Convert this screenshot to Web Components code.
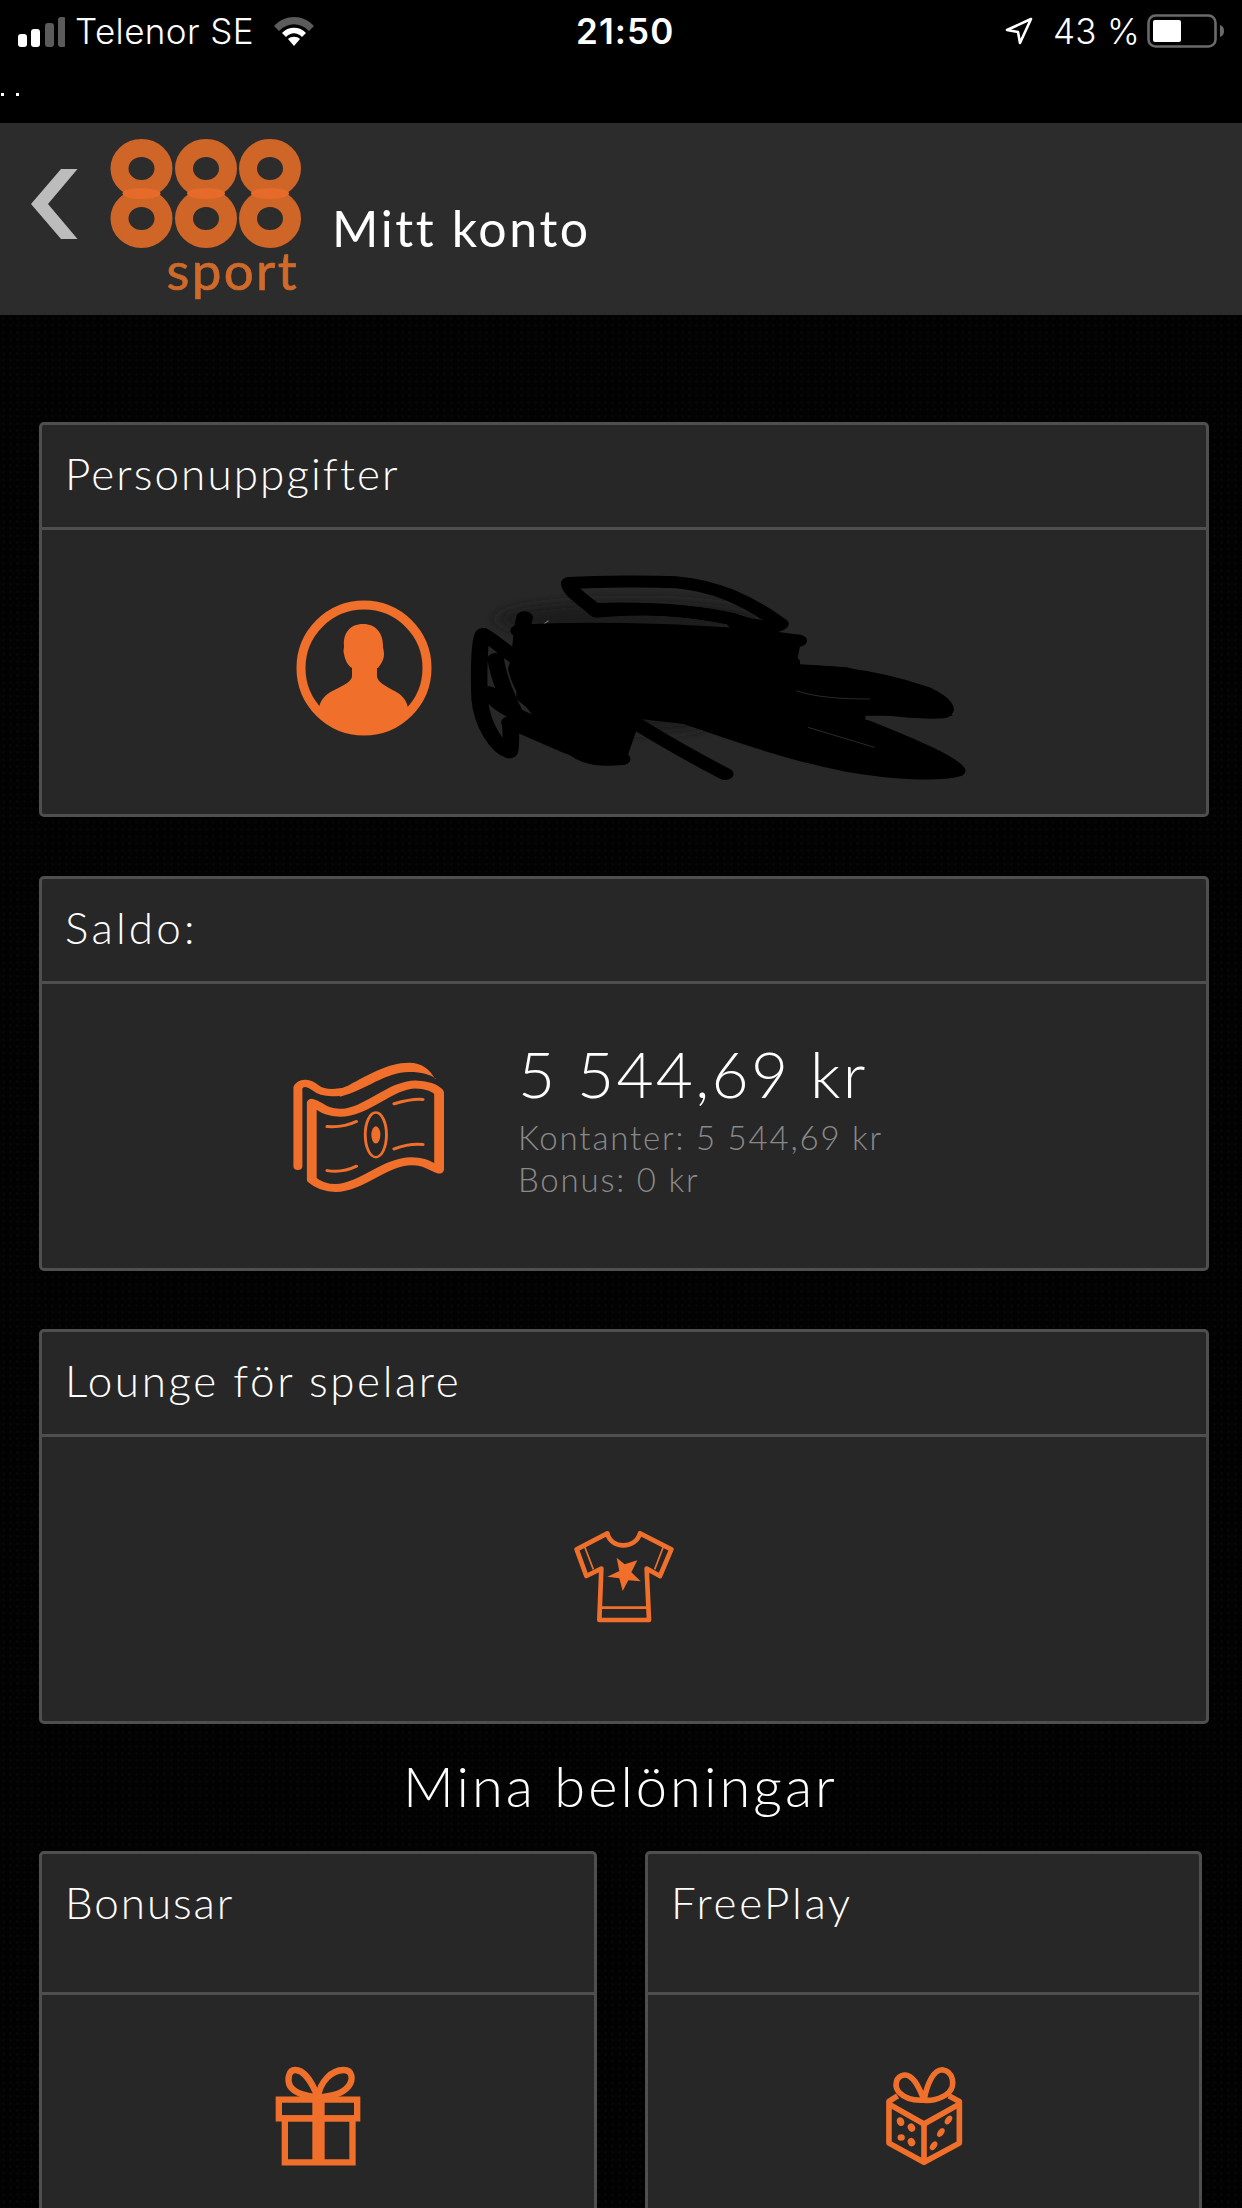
<!DOCTYPE html>
<html lang="sv"><head><meta charset="utf-8"><title>Mitt konto</title>
<style>
html,body{margin:0;padding:0;background:#020202;}
body{width:1242px;height:2208px;overflow:hidden;font-family:"Lato","Liberation Sans",sans-serif;color:#fff;}
</style></head>
<body>
<account-page></account-page>
<template id="t-status">
<style>
:host{display:block;height:123px;background:#000;color:#fff;font-family:Inter,"Liberation Sans",sans-serif;position:relative}
.row{display:flex;align-items:center;height:62px;padding-left:18px;font-size:35px;font-weight:300}
.bars{width:47px;height:31px;display:block;margin-right:10px}
.car{width:198px;white-space:nowrap;letter-spacing:.4px}
.wifi{width:42px;height:30px;display:block}
.time{margin-left:261px;font-weight:600;font-size:35px;letter-spacing:1.100px;width:101px;white-space:nowrap}
.arrow{margin-left:328px;width:28px;height:28px;display:block}
.pct{margin-left:20px;width:95px;white-space:nowrap;letter-spacing:.3px}
.batt{margin-left:-1px;width:78px;height:34px;display:block}
.dots{display:flex;gap:12px;padding-left:1px;margin-top:31px}
.dots i{display:block;width:3px;height:3px;background:#fff}
</style>
<div class="row">
<svg class="bars" viewBox="0 0 47 31"><rect x="0" y="18" width="9" height="13" rx="3" fill="#fff"/><rect x="13" y="13" width="9" height="18" rx="3" fill="#fff"/><rect x="27" y="7" width="9" height="24" rx="3" fill="#5b5b5b"/><rect x="40" y="1" width="8" height="30" rx="3" fill="#5b5b5b"/></svg>
<span class="car">Telenor SE</span>
<svg class="wifi" viewBox="0 0 42 30"><path d="M1 10 C12 -2 30 -2 41 10 L36 15 C27 6 15 6 6 15Z" fill="#5b5b5b"/><path d="M9 17 C15 10 27 10 33 17 L29 21 C24 16 18 16 13 21Z" fill="#fff"/><path d="M15 23 C18 20 24 20 27 23 L21 30Z" fill="#fff"/></svg>
<span class="time">21:50</span>
<svg class="arrow" viewBox="0 0 28 28"><path d="M26 2 L2 13 L13 15 L15 26Z" fill="none" stroke="#fff" stroke-width="2.6" stroke-linejoin="round"/></svg>
<span class="pct">43 %</span>
<svg class="batt" viewBox="0 0 78 34"><rect x="1.5" y="1.5" width="67" height="31" rx="7" fill="none" stroke="#6a6a6a" stroke-width="2.6"/><rect x="6" y="6" width="28" height="22" rx="2" fill="#fff"/><path d="M73 11 C76 12 77 14 77 17 C77 20 76 22 73 23Z" fill="#6a6a6a"/></svg>
</div>
<div class="dots"><i></i><i></i></div>
</template>
<template id="t-header">
<style>
:host{display:flex;height:192px;background:#2c2c2c;box-sizing:border-box;padding-left:30px;align-items:flex-start}
.chev{width:48px;height:72px;margin-top:45px;display:block}
.wrap{display:flex;flex-direction:column;align-items:flex-end;width:192px;margin-left:32px;}
.logo{margin:15px 0 0;width:192px;height:112px;display:block;filter:blur(.6px)}
.sport{font-size:53px;line-height:40px;color:#d06a2b;font-weight:400;margin-top:0;margin-right:3px;filter:blur(.6px);letter-spacing:2.300px;-webkit-text-stroke:.7px #d06a2b}
h1{margin:75px 0 0 30px;font-size:50px;line-height:60px;font-weight:400;letter-spacing:2.600px;color:#fff}
</style>
<svg class="chev" viewBox="0 0 48 72"><path d="M47.500 1 L31 1 L1 36 L31 71 L47.500 71 L18 36Z" fill="#bcbcbc"/></svg>
<div class="wrap">
<svg class="logo" viewBox="0 0 192 112" role="img" aria-label="888">
<g fill="none" stroke="#cf6526" stroke-width="18">
<ellipse cx="31.500" cy="30.500" rx="22" ry="20.500"/><ellipse cx="96" cy="30.500" rx="22" ry="20.500"/><ellipse cx="160" cy="30.500" rx="22" ry="20.500"/>
<ellipse cx="31.500" cy="80.500" rx="22" ry="20.500"/><ellipse cx="96" cy="80.500" rx="22" ry="20.500"/><ellipse cx="160" cy="80.500" rx="22" ry="20.500"/>
</g>
<g fill="#e66a2a"><ellipse cx="31.500" cy="55.500" rx="19" ry="5.500"/><ellipse cx="96" cy="55.500" rx="19" ry="5.500"/><ellipse cx="160" cy="55.500" rx="19" ry="5.500"/></g>
</svg>
<span class="sport">sport</span>
</div>
<h1>Mitt konto</h1>
</template>
<template id="t-card">
<style>
:host{display:block;box-sizing:border-box;background:#272727;border:3px solid #4f4f4f;border-radius:5px;}
.head{height:var(--head,102px);border-bottom:3px solid #4f4f4f;padding:0 0 0 23px;font-size:44px;font-weight:300;letter-spacing:2.100px;color:#fff;line-height:var(--lh,97px)}
.body{height:var(--body,284px);display:flex;align-items:center;justify-content:center;position:relative;box-sizing:border-box}
</style>
<div class="head"><slot name="title"></slot></div>
<div class="body"><slot></slot></div>
</template>
<template id="t-page">
<style>
:host{display:block;width:1242px;height:2208px;overflow:hidden;background-color:#020202;background-image:radial-gradient(#070707 1px,transparent 1.500px);background-size:7px 7px}
main{padding:107px 33px 0 39px;display:flex;flex-direction:column}
.gap{height:58.500px;flex:none}
h2{margin:22px 0 0;font-size:56px;line-height:80px;font-weight:300;letter-spacing:3.050px;color:#fff;text-align:center;height:94px;padding-right:7px}
.two{display:grid;grid-template-columns:558px 557px;column-gap:48px;margin-top:11px;--head:138px;--lh:96px;--body:400px;}
svg{display:block;flex:none}
.scribble{position:absolute;left:231px;top:29px;width:720px;height:240px;overflow:visible}
.avatar{margin-right:520px;margin-bottom:8px}
.money{display:flex;align-items:flex-start;padding-right:72px}
.money .icon{margin-top:11px}
.money .txt{margin-left:74px;display:flex;flex-direction:column;margin-top:-14px}
.big{font-size:64px;line-height:74px;font-weight:300;letter-spacing:2.300px;color:#fff;margin-left:0;margin-bottom:5px}
.sub{font-size:33px;line-height:42px;font-weight:300;letter-spacing:1.800px;color:#8a8a8a;white-space:nowrap}
.grayline{stroke:#7a7a7a;stroke-width:2.500;fill:none}
.tee{margin-bottom:4px}
.rew{margin-bottom:159px}
</style>
<main>
<info-card><span slot="title">Personuppgifter</span>
<svg class="avatar" width="136" height="136" viewBox="0 0 136 136">
<circle cx="68" cy="68" r="63" fill="none" stroke="#f0702b" stroke-width="9"/>
<path d="M67 24 C80 24 87 33 87 46 C87 49 88 50 88 54 C88 60 85 64 82 68 L81 68 L81 76 C81 83 94 88 102 93 C108 97 111 102 112 108 C100 124 86 132 68 132 C50 132 36 124 23 108 C24 102 27 97 33 93 C41 88 56 83 56 76 L56 68 C52 66 49 60 48 54 C47 50 48 49 48 46 C47 33 54 24 67 24Z" fill="#f0702b"/>
</svg>
<svg class="scribble" viewBox="0 0 1568 720" preserveAspectRatio="none">
<defs><filter id="b" x="-20%" y="-50%" width="140%" height="200%"><feGaussianBlur stdDeviation="16"/></filter></defs>
<ellipse cx="780" cy="180" rx="290" ry="55" fill="#1a1a1a" filter="url(#b)"/>
<ellipse cx="830" cy="480" rx="130" ry="40" fill="#1c1c1c" filter="url(#b)"/>
<path class="grayline" d="M590 195 L600 185 M655 240 L680 232 L700 245 M720 240 L760 238 M560 280 L553 310 M775 440 L775 465 M815 435 L815 465"/>
<path d="M535 205 L1150 245 L1140 315 L1250 325 L1450 405 L1480 470 L1290 470 L1290 490 L1490 620 L1500 650 L1400 655 L1150 590 L930 500 L800 480 L770 600 L700 610 L600 500 L530 420 L530 310Z" fill="#000"/>
<g fill="none" stroke="#000" stroke-linecap="round" stroke-linejoin="round" stroke-width="36">
<path d="M645 72 C720 66 820 66 880 70 C960 80 1030 120 1105 195 C1095 212 1040 200 1000 180 C900 150 800 145 705 158 C680 125 645 100 645 72Z"/>
<path d="M700 150 C800 145 900 150 1000 180 L1070 295"/>
<path d="M535 215 C700 200 1000 215 1145 245 M1100 260 L1130 310"/>
<path d="M548 175 C540 210 540 300 530 330 C540 400 590 480 650 565 C680 605 720 605 760 600"/>
<path d="M458 225 C448 240 448 360 450 420 C455 500 490 570 515 580 C520 560 518 500 515 490 L640 565 L700 595 L760 600 M458 225 C500 260 520 300 590 350 M470 400 C490 450 540 470 600 510 M485 300 C490 350 510 420 530 470"/>
<path d="M690 400 C780 490 880 570 985 645"/>
<path d="M1050 335 C1200 330 1300 345 1420 400 C1465 430 1470 450 1460 460 C1400 465 1280 450 1150 400"/>
<path d="M800 430 C950 500 1100 580 1250 620 C1350 645 1450 650 1490 635 C1480 610 1400 560 1290 500"/>
</g>
<path d="M1140 395 C1180 415 1240 420 1300 420" stroke="#777" stroke-width="1.500" fill="none" opacity=".6"/>
<path d="M1165 505 L1310 565" stroke="#666" stroke-width="1.500" fill="none" opacity=".7"/>
</svg>
</info-card>
<div class="gap"></div>
<info-card><span slot="title" style="letter-spacing:3.200px">Saldo:</span>
<div class="money">
<svg class="icon" width="151" height="131" viewBox="60 128 370 392" preserveAspectRatio="none">
<g fill="none" stroke="#f0702b" stroke-linecap="round" stroke-linejoin="round">
<path stroke-width="24" d="M106 250 C125 255 135 280 175 280 C240 280 300 195 360 195 C385 195 410 205 418 220 L418 450 C395 440 385 425 350 425 C285 425 225 505 165 505 C140 505 120 495 106 480Z"/>
<path stroke-width="22" d="M72 440 L72 205 C80 185 100 190 115 205 C130 220 150 222 175 218"/>
<path stroke-width="9" d="M308 253 C330 245 355 238 378 240 M308 388 C330 378 355 372 378 375 M144 321 C170 323 195 318 215 306 M144 453 C170 458 195 452 215 440"/>
</g>
<path d="M408 178 C395 150 375 130 345 130 C290 130 240 170 200 195 C185 205 175 208 165 208 L175 232 C240 212 285 158 345 158 C375 158 395 165 411 178Z" fill="#f0702b"/>
<ellipse cx="263" cy="346" rx="26" ry="67" fill="none" stroke="#f0702b" stroke-width="7"/>
<ellipse cx="263" cy="346" rx="11" ry="26" fill="#f0702b"/>
</svg>
<div class="txt"><div class="big">5 544,69 kr</div><div class="sub">Kontanter: 5 544,69 kr</div><div class="sub">Bonus: 0 kr</div></div>
</div>
</info-card>
<div class="gap"></div>
<info-card><span slot="title" style="letter-spacing:2.600px">Lounge för spelare</span>
<svg class="tee" width="100" height="92" viewBox="100 90 300 276">
<g fill="none" stroke="#f0702b" stroke-width="14" stroke-linejoin="round">
<path d="M200 97 C210 145 285 145 298 97 L392 145 L358 225 L318 203 L325 357 L176 357 L182 203 L137 225 L108 145Z"/>
<path d="M176 320 L325 320" stroke-width="8"/>
</g>
<path d="M130 132 L158 205 M370 132 L342 205" stroke="#f0702b" stroke-width="5" fill="none"/>
<path d="M228 170 L252 190 L290 178 L272 214 L300 241 L263 238 L246 270 L236 232 L200 227 L236 210Z" fill="#f0702b"/>
</svg>
</info-card>
<h2>Mina belöningar</h2>
<div class="two">
<info-card><span slot="title" style="letter-spacing:1.900px">Bonusar</span>
<svg class="rew" width="86" height="100" viewBox="105 74 257 300">
<g fill="none" stroke="#f0702b" stroke-width="19">
<path d="M116 175 L351 175 L351 231 L116 231Z"/>
<path d="M134 231 L337 231 L337 363 L134 363Z"/>
<path d="M235 175 L235 363" stroke-width="37"/>
<path d="M233 168 C215 120 190 86 165 86 C145 86 140 115 150 135 C165 158 200 165 233 168 C240 120 275 86 310 86 C338 86 340 115 325 135 C305 160 270 165 233 168Z" stroke-width="19"/>
</g>
</svg>
</info-card>
<info-card><span slot="title" style="letter-spacing:2.700px">FreePlay</span>
<svg class="rew" width="78" height="100" viewBox="72 76 236 300">
<g fill="none" stroke="#f0702b" stroke-width="17" stroke-linejoin="round">
<path d="M110 165 L84 182 L84 308 L190 366 L297 308 L297 182 L265 165"/>
<path d="M84 190 L190 250 L297 190"/>
<path d="M190 250 L190 366"/>
<path d="M190 178 C172 130 155 100 130 102 C105 105 98 135 115 155 C135 175 160 180 190 178 C205 180 240 178 265 155 C285 135 280 90 245 86 C220 86 200 125 190 178Z"/>
</g>
<g fill="#f0702b"><ellipse cx="119" cy="243" rx="11" ry="14" transform="rotate(-25 119 243)"/><ellipse cx="152" cy="261" rx="11" ry="13" transform="rotate(-25 152 261)"/><ellipse cx="121" cy="291" rx="11" ry="10"/><ellipse cx="152" cy="305" rx="11" ry="13" transform="rotate(-25 152 305)"/><ellipse cx="264" cy="238" rx="9" ry="15" transform="rotate(35 264 238)"/><ellipse cx="241" cy="276" rx="9" ry="15" transform="rotate(35 241 276)"/><ellipse cx="219" cy="316" rx="9" ry="15" transform="rotate(35 219 316)"/></g>
</svg>
</info-card>
</div>
</main>
</template>
<script>
function tpl(name,id){customElements.define(name,class extends HTMLElement{constructor(){super();this.attachShadow({mode:"open"}).appendChild(document.getElementById(id).content.cloneNode(true));}});}
tpl("status-bar","t-status");
tpl("app-header","t-header");
tpl("info-card","t-card");
customElements.define("account-page",class extends HTMLElement{constructor(){super();const r=this.attachShadow({mode:"open"});
const top=document.createElement("div");
top.appendChild(document.createElement("status-bar"));top.appendChild(document.createElement("app-header"));
r.appendChild(top);r.appendChild(document.getElementById("t-page").content.cloneNode(true));}});
</script>
</body></html>
